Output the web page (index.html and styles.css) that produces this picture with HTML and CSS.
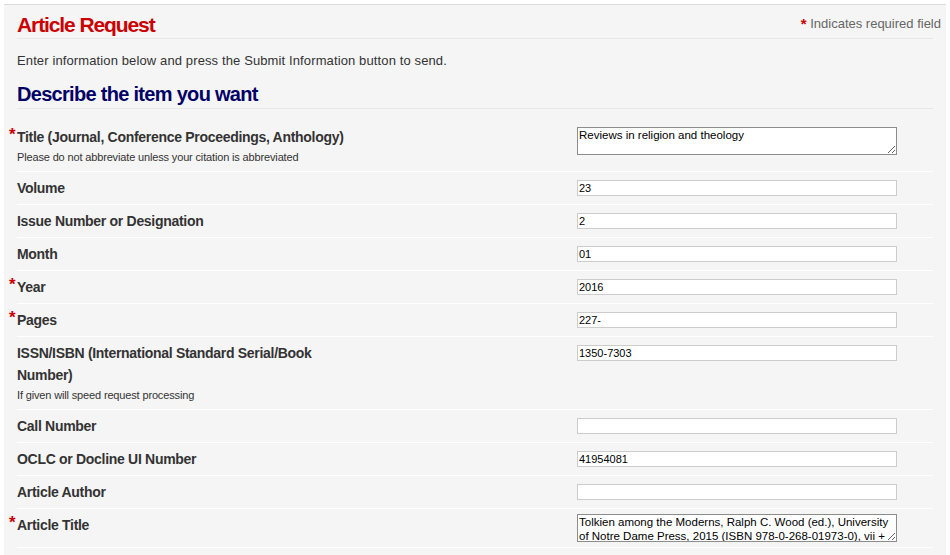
FILE: index.html
```html
<!DOCTYPE html>
<html lang="en">
<head>
<meta charset="utf-8">
<title>Article Request</title>
<link rel="stylesheet" href="styles.css">
</head>
<body>
<div class="panel">
  <div class="header">
    <h1 class="title">Article Request</h1>
    <div class="note"><span class="note-star">*</span> Indicates required field</div>
  </div>
  <p class="intro">Enter information below and press the Submit Information button to send.</p>
  <h2 class="section">Describe the item you want</h2>
  <form class="rows">
    <div class="row">
      <div class="label-cell"><div class="label"><span class="req">*</span>Title (Journal, Conference Proceedings, Anthology)</div><div class="hint">Please do not abbreviate unless your citation is abbreviated</div></div>
      <div class="field-cell"><textarea class="area area-first">Reviews in religion and theology</textarea></div>
    </div>
    <div class="row">
      <div class="label-cell"><div class="label">Volume</div></div>
      <div class="field-cell"><input class="text" type="text" value="23"></div>
    </div>
    <div class="row">
      <div class="label-cell"><div class="label">Issue Number or Designation</div></div>
      <div class="field-cell"><input class="text" type="text" value="2"></div>
    </div>
    <div class="row">
      <div class="label-cell"><div class="label">Month</div></div>
      <div class="field-cell"><input class="text" type="text" value="01"></div>
    </div>
    <div class="row">
      <div class="label-cell"><div class="label"><span class="req">*</span>Year</div></div>
      <div class="field-cell"><input class="text" type="text" value="2016"></div>
    </div>
    <div class="row">
      <div class="label-cell"><div class="label"><span class="req">*</span>Pages</div></div>
      <div class="field-cell"><input class="text" type="text" value="227-"></div>
    </div>
    <div class="row">
      <div class="label-cell"><div class="label">ISSN/ISBN (International Standard Serial/Book Number)</div><div class="hint">If given will speed request processing</div></div>
      <div class="field-cell"><input class="text" type="text" value="1350-7303"></div>
    </div>
    <div class="row">
      <div class="label-cell"><div class="label">Call Number</div></div>
      <div class="field-cell"><input class="text" type="text" value=""></div>
    </div>
    <div class="row">
      <div class="label-cell"><div class="label">OCLC or Docline UI Number</div></div>
      <div class="field-cell"><input class="text" type="text" value="41954081"></div>
    </div>
    <div class="row">
      <div class="label-cell"><div class="label">Article Author</div></div>
      <div class="field-cell"><input class="text" type="text" value=""></div>
    </div>
    <div class="row">
      <div class="label-cell"><div class="label"><span class="req">*</span>Article Title</div></div>
      <div class="field-cell"><textarea class="area">Tolkien among the Moderns, Ralph C. Wood (ed.), University of Notre Dame Press, 2015 (ISBN 978-0-268-01973-0), vii + 232 pp.</textarea></div>
    </div>
    <div class="row">
      <div class="label-cell"><div class="label"><span class="req">*</span></div></div>
      <div class="field-cell"></div>
    </div>
  </form>
</div>
</body>
</html>
```

FILE: styles.css
```css
html, body {
  margin: 0;
  padding: 0;
  background: #ffffff;
}
body {
  font-family: "Liberation Sans", Arial, Helvetica, sans-serif;
  color: #333333;
}
.panel {
  margin: 4px 4px 0 4px;
  background: #f5f5f5;
  border-top: 1px solid #dddddd;
  padding: 8px 13px 0 13px;
}
.header {
  display: flex;
  justify-content: space-between;
  align-items: flex-start;
  border-bottom: 1px solid #e8e8e8;
  padding-bottom: 1px;
}
.title {
  margin: 0;
  font-size: 21px;
  line-height: 24px;
  font-weight: bold;
  letter-spacing: -1.1px;
  color: #cc0000;
}
.note {
  margin: 3px -8px 0 0;
  font-size: 13px;
  line-height: 16px;
  color: #666666;
}
.note-star {
  color: #cc0000;
  font-weight: bold;
  font-size: 15px;
  vertical-align: top;
  line-height: 1;
}
.intro {
  margin: 13px 0 0 0;
  font-size: 13px;
  line-height: 18px;
  letter-spacing: 0.12px;
  color: #333333;
}
.section {
  margin: 12px 0 0 0;
  padding-bottom: 2px;
  font-size: 20px;
  line-height: 24px;
  font-weight: bold;
  letter-spacing: -0.7px;
  color: #000066;
  border-bottom: 1px solid #e8e8e8;
}
.rows {
  margin: 12px 0 0 0;
}
.row {
  display: grid;
  grid-template-columns: 560px 1fr;
  padding: 5px 0;
  border-bottom: 1px solid #ffffff;
}
.label-cell {
  min-width: 0;
}
.label {
  max-width: 340px;
  min-height: 22px;
  font-size: 14px;
  line-height: 22px;
  font-weight: bold;
  letter-spacing: -0.3px;
  color: #333333;
}
.req {
  display: inline-block;
  margin-left: -8px;
  width: 8px;
  color: #cc0000;
  font-size: 17px;
  line-height: 1;
  letter-spacing: 0;
  vertical-align: top;
}
.hint {
  font-size: 11px;
  line-height: 18px;
  letter-spacing: -0.15px;
  color: #333333;
}
.field-cell {
  display: flex;
  align-items: flex-start;
}
.text {
  box-sizing: border-box;
  margin: 3px 0 0 0;
  width: 320px;
  height: 16px;
  padding: 0 1px;
  border: 1px solid #cccccc;
  border-radius: 0;
  background: #ffffff;
  font-family: "Liberation Sans", Arial, sans-serif;
  font-size: 11px;
  color: #000000;
  outline: none;
}
.area {
  box-sizing: border-box;
  margin: 0;
  width: 320px;
  height: 28px;
  padding: 0 1px;
  border: 1px solid #8c8c8c;
  border-radius: 0;
  background: #ffffff;
  font-family: "Liberation Sans", Arial, sans-serif;
  font-size: 11.5px;
  line-height: 14px;
  color: #000000;
  overflow: hidden;
  resize: both;
}
.area-first {
  margin-top: 1px;
}
```
